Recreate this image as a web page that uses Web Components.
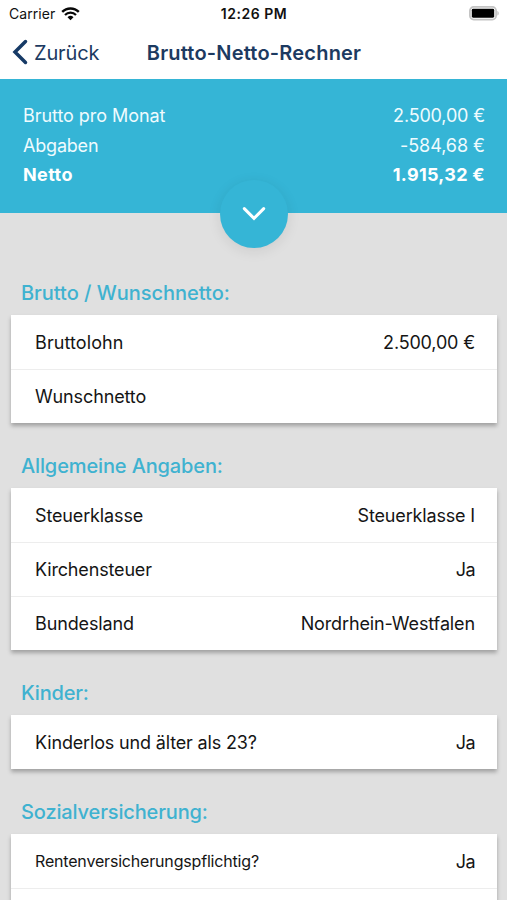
<!DOCTYPE html>
<html lang="de">
<head>
<meta charset="utf-8">
<title>Brutto-Netto-Rechner</title>
<style>
html, body { margin: 0; height: 100%; overflow: hidden; }
body { background: #e0e0e0; font-family: Inter, "Liberation Sans", sans-serif; color: #151515; }
</style>
</head>
<body>
<salary-app>
  <status-bar></status-bar>
  <nav-bar back="Zurück">Brutto-Netto-Rechner</nav-bar>
  <summary-panel>
    <summary-line style="--ls:-.05px;--vls:-.17px" value="2.500,00 €">Brutto pro Monat</summary-line>
    <summary-line style="--ls:-.2px;--vls:-.05px" value="-584,68 €">Abgaben</summary-line>
    <summary-line strong style="--ls:.4px;--vls:.3px" value="1.915,32 €">Netto</summary-line>
  </summary-panel>
  <form-section heading="Brutto / Wunschnetto:" style="--hls:-.02px">
    <form-row value="2.500,00 €" style="--ls:.1px;--vls:-.17px">Bruttolohn</form-row>
    <form-row style="--ls:-.13px">Wunschnetto</form-row>
  </form-section>
  <form-section heading="Allgemeine Angaben:" style="--hls:-.13px">
    <form-row value="Steuerklasse I" style="--ls:-.14px;--vls:-.16px">Steuerklasse</form-row>
    <form-row value="Ja" style="--ls:-.16px;--vls:-.6px">Kirchensteuer</form-row>
    <form-row value="Nordrhein-Westfalen" style="--ls:-.12px;--vls:-.12px">Bundesland</form-row>
  </form-section>
  <form-section heading="Kinder:" style="--hls:-.2px">
    <form-row value="Ja" style="--ls:-.16px;--vls:-.6px">Kinderlos und älter als 23?</form-row>
  </form-section>
  <form-section heading="Sozialversicherung:" style="--hls:-.14px">
    <form-row small value="Ja" style="--ls:-.18px;--vls:-.6px">Rentenversicherungspflichtig?</form-row>
    <form-row></form-row>
  </form-section>
</salary-app>
<script>
function define(name, html, setup) {
  customElements.define(name, class extends HTMLElement {
    constructor() {
      super();
      const template = document.createElement('template');
      template.innerHTML = html;
      this.attachShadow({ mode: 'open' }).append(template.content.cloneNode(true));
    }
    connectedCallback() { if (setup) setup(this, this.shadowRoot); }
  });
}
const showValue = (el, root) => {
  root.querySelector('.value').textContent = el.getAttribute('value') || '';
};

define('salary-app', `
<style>:host { display: flex; flex-direction: column; height: 900px; overflow: hidden; }</style>
<slot></slot>`);

define('status-bar', `
<style>
:host { display: grid; grid-template-columns: 1fr auto 1fr; align-items: center; flex: none; height: 27px; padding: 0 8px 0 9px; background: #fff; font-size: 14px; line-height: 27px; color: #111; }
.left { display: flex; align-items: center; gap: 6px; letter-spacing: .05px; }
.time { font-weight: 600; letter-spacing: .5px; }
.battery { justify-self: end; }
svg { display: block; }
</style>
<span class="left"><span>Carrier</span>
<svg width="19" height="14" viewBox="0 0 19 14" fill="none" stroke="#080808">
<path d="M1.2 4.900a11.700 11.700 0 0 1 16.600 0" stroke-width="2.4"/>
<path d="M4 8a7.700 7.700 0 0 1 11 0" stroke-width="2.2"/>
<path d="M9.500 13.200 6.500 10.300a4.300 4.300 0 0 1 6 0z" fill="#080808" stroke="none"/></svg></span>
<span class="time">12:26 PM</span>
<svg class="battery" width="30" height="15" viewBox="0 0 30 15">
<rect x=".9" y=".9" width="26.2" height="12.7" rx="3.8" fill="#fff" stroke="#c4c4c4" stroke-width="1.8"/>
<rect x="2.8" y="2.8" width="22.400" height="8.900" rx="1.400" fill="#000"/>
<path d="M28.300 5c2 .7 2 3.900 0 4.600z" fill="#c4c4c4"/></svg>`);

define('nav-bar', `
<style>
:host { display: grid; grid-template-columns: 1fr auto 1fr; align-items: center; flex: none; height: 52px; box-sizing: border-box; padding: 0 11px 0 12px; background: #fff; color: #1c3a61; font-size: 20px; line-height: 50px; }
.back { display: flex; align-items: center; gap: 6px; letter-spacing: -.15px; }
.title { font-weight: 600; letter-spacing: .2px; }
svg { display: block; position: relative; top: -1px; }
</style>
<span class="back"><svg width="16" height="26" viewBox="0 0 16 26" fill="none" stroke="#163a66" stroke-width="3.500" stroke-linecap="round" stroke-linejoin="miter"><path d="M13.500 2.600 3 13l10.500 10.400"/></svg><span class="label"></span></span>
<span class="title"><slot></slot></span>`,
(el, root) => { root.querySelector('.label').textContent = el.getAttribute('back'); });

define('summary-panel', `
<style>
:host { display: block; position: relative; flex: none; height: 134px; box-sizing: border-box; padding: 22.200px 22px 0 23px; background: #35b5d6; color: #effbfe; }
.toggle { position: absolute; left: 50%; bottom: -34.500px; width: 68px; height: 68px; margin-left: -34px; border-radius: 50%; background: #35b5d6; box-shadow: 0 3px 14px rgba(0,0,0,.09); display: grid; place-items: center; }
</style>
<slot></slot>
<div class="toggle"><svg width="24" height="16" viewBox="0 0 24 16" fill="none" stroke="#fff" stroke-width="3" stroke-linecap="round"><path d="m2.300 2.600 9.700 9.700 9.700-9.700"/></svg></div>`);

define('summary-line', `
<style>
:host { display: flex; justify-content: space-between; font-size: 18px; line-height: 29.400px; }
:host([strong]) { font-weight: 700; color: #fff; }
.label { letter-spacing: var(--ls); }
.value { letter-spacing: var(--vls); }
</style>
<span class="label"><slot></slot></span><span class="value"></span>`, showValue);

define('form-section', `
<style>
:host { display: block; flex: none; padding: 33px 10px 0 11px; }
:host(:first-of-type) { padding-top: 70px; }
.heading { padding-left: 10px; margin-bottom: 12px; font-size: 20px; line-height: 20px; font-weight: 500; color: #3fb2d0; letter-spacing: var(--hls); }
.card { background: #fff; box-shadow: 0 3px 4px rgba(0,0,0,.28); }
</style>
<div class="heading"></div><div class="card"><slot></slot></div>`,
(el, root) => { root.querySelector('.heading').textContent = el.getAttribute('heading'); });

define('form-row', `
<style>
:host { display: flex; justify-content: space-between; height: 54px; box-sizing: border-box; padding: 0 22px 0 24px; border-top: 1px solid #ededed; font-size: 18px; line-height: 54px; }
:host(:first-of-type) { border-top-color: transparent; }
:host([small]) .label { font-size: 16px; line-height: 52px; }
.label { letter-spacing: var(--ls); }
.value { letter-spacing: var(--vls); }
</style>
<span class="label"><slot></slot></span><span class="value"></span>`, showValue);
</script>
</body>
</html>
